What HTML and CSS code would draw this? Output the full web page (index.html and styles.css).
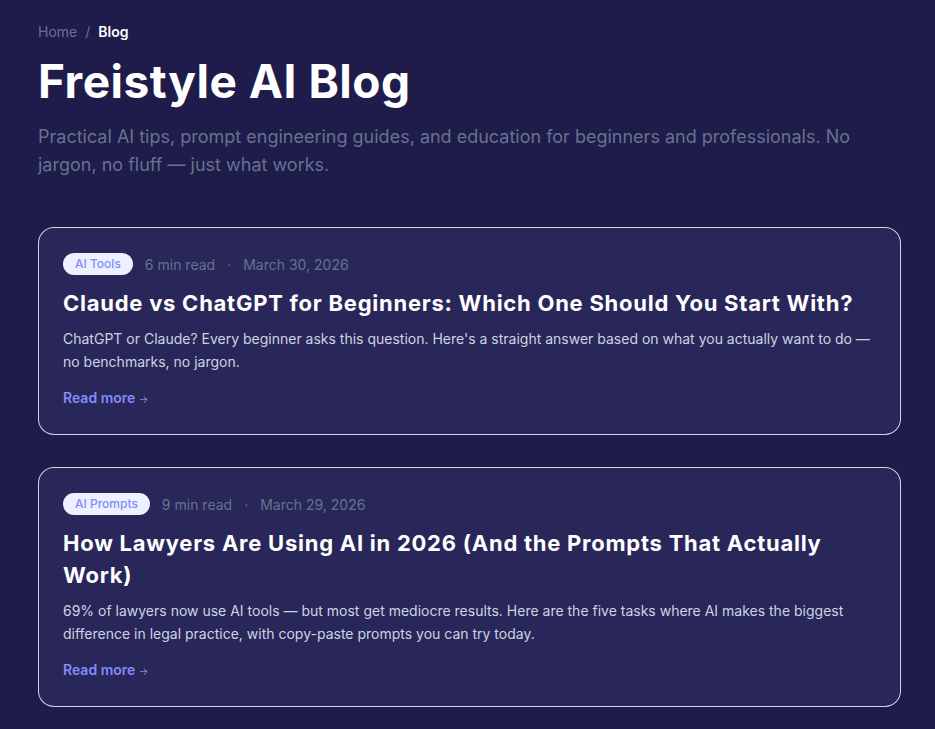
FILE: index.html
```html
<!DOCTYPE html>
<html lang="en">
<head>
  <meta charset="UTF-8">
  <title>Freistyle AI Blog</title>
  <meta name="viewport" content="width=device-width, initial-scale=1.0">
  <link rel="stylesheet" href="styles.css">
</head>
<body>
  <div class="page">
    <nav class="breadcrumb">
      <a href="#" class="crumb-link">Home</a>
      <span class="crumb-sep">/</span>
      <span class="crumb-current">Blog</span>
    </nav>

    <h1 class="page-title">Freistyle AI Blog</h1>
    <p class="page-intro">Practical AI tips, prompt engineering guides, and education for beginners and professionals. No jargon, no fluff — just what works.</p>

    <div class="post-list">
      <article class="post-card">
        <div class="post-meta">
          <span class="post-tag">AI Tools</span>
          <span>6 min read</span>
          <span class="meta-dot">·</span>
          <span>March 30, 2026</span>
        </div>
        <h2 class="post-title">Claude vs ChatGPT for Beginners: Which One Should You Start With?</h2>
        <p class="post-excerpt">ChatGPT or Claude? Every beginner asks this question. Here's a straight answer based on what you actually want to do — no benchmarks, no jargon.</p>
        <a href="#" class="read-more">Read more <span class="arrow">→</span></a>
      </article>

      <article class="post-card">
        <div class="post-meta">
          <span class="post-tag">AI Prompts</span>
          <span>9 min read</span>
          <span class="meta-dot">·</span>
          <span>March 29, 2026</span>
        </div>
        <h2 class="post-title">How Lawyers Are Using AI in 2026 (And the Prompts That Actually Work)</h2>
        <p class="post-excerpt">69% of lawyers now use AI tools — but most get mediocre results. Here are the five tasks where AI makes the biggest difference in legal practice, with copy-paste prompts you can try today.</p>
        <a href="#" class="read-more">Read more <span class="arrow">→</span></a>
      </article>
    </div>
  </div>
</body>
</html>
```

FILE: styles.css
```css
body {
  margin: 0;
  background-color: #1f1b4b;
  font-family: Inter, "Noto Sans", sans-serif;
  color: #fff;
}

.page {
  padding: 22px 34px 40px 38px;
}

.breadcrumb {
  display: flex;
  align-items: center;
  gap: 8px;
  font-size: 14px;
  line-height: 20px;
}

.crumb-link {
  color: #64748b;
  text-decoration: none;
}

.crumb-sep {
  color: #64748b;
}

.crumb-current {
  color: #fff;
  font-weight: 600;
}

.page-title {
  margin: 11px 0 0;
  font-size: 46px;
  line-height: 56px;
  font-weight: 700;
  letter-spacing: 0.5px;
}

.page-intro {
  margin: 14px 0 0;
  font-size: 18px;
  line-height: 28px;
  color: #64748b;
}

.post-list {
  margin-top: 48px;
  display: flex;
  flex-direction: column;
  gap: 32px;
}

.post-card {
  background: #29265a;
  border: 1px solid rgba(255, 255, 255, 0.8);
  border-radius: 16px;
  padding: 25px 24px 27px;
}

.post-meta {
  display: flex;
  align-items: center;
  gap: 12px;
  font-size: 14px;
  color: #64748b;
}

.post-tag {
  background: #eef0ff;
  color: #818cf8;
  font-size: 12px;
  font-weight: 500;
  line-height: 22px;
  padding: 0 12px;
  border-radius: 999px;
}

.post-title {
  margin: 12px 0 0;
  font-size: 22px;
  line-height: 32px;
  font-weight: 700;
  letter-spacing: 0.75px;
}

.post-excerpt {
  margin: 8px 0 0;
  font-size: 14px;
  line-height: 23px;
  color: #cbd5e1;
}

.read-more {
  display: inline-block;
  margin-top: 16px;
  font-size: 14px;
  font-weight: 600;
  color: #818cf8;
  text-decoration: none;
}

.arrow {
  font-size: 10px;
  font-weight: 400;
}
```
